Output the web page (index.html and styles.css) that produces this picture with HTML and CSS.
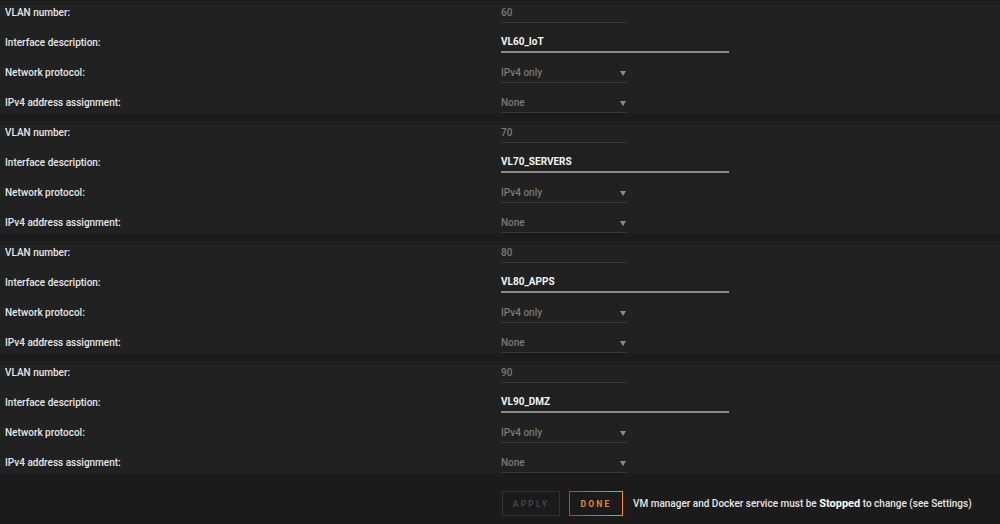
FILE: index.html
```html
<!DOCTYPE html>
<html lang="en">
	<head>
		<meta charset="utf-8">
		<title>Network Settings</title>
		<link rel="stylesheet" href="styles.css">
	</head>
	<body>
		<div class="shade">
			<div class="row"><span class="label">VLAN number:</span><span class="field num">60</span></div>
			<div class="row"><span class="label">Interface description:</span><span class="field desc">VL60_IoT</span></div>
			<div class="row"><span class="label">Network protocol:</span><span class="field select">IPv4 only</span></div>
			<div class="row"><span class="label">IPv4 address assignment:</span><span class="field select">None</span></div>
		</div>
		<div class="shade">
			<div class="row"><span class="label">VLAN number:</span><span class="field num">70</span></div>
			<div class="row"><span class="label">Interface description:</span><span class="field desc">VL70_SERVERS</span></div>
			<div class="row"><span class="label">Network protocol:</span><span class="field select">IPv4 only</span></div>
			<div class="row"><span class="label">IPv4 address assignment:</span><span class="field select">None</span></div>
		</div>
		<div class="shade">
			<div class="row"><span class="label">VLAN number:</span><span class="field num">80</span></div>
			<div class="row"><span class="label">Interface description:</span><span class="field desc">VL80_APPS</span></div>
			<div class="row"><span class="label">Network protocol:</span><span class="field select">IPv4 only</span></div>
			<div class="row"><span class="label">IPv4 address assignment:</span><span class="field select">None</span></div>
		</div>
		<div class="shade">
			<div class="row"><span class="label">VLAN number:</span><span class="field num">90</span></div>
			<div class="row"><span class="label">Interface description:</span><span class="field desc">VL90_DMZ</span></div>
			<div class="row"><span class="label">Network protocol:</span><span class="field select">IPv4 only</span></div>
			<div class="row"><span class="label">IPv4 address assignment:</span><span class="field select">None</span></div>
		</div>

		<div class="footer">
			<button class="btn" disabled>Apply</button>
			<button class="btn done">Done</button>
			<span class="note">VM manager and Docker service must be <b>Stopped</b> to change (see Settings)</span>
		</div>
	</body>
</html>
```

FILE: styles.css
```css
body {
	margin: 0;
	padding-top: 1px;
	background-color: #1c1b1b;
	font-family: Roboto, "Open Sans", sans-serif;
	font-size: 10px;
	color: #e6e6e6;
}

.shade {
	display: flex;
	flex-direction: column;
	gap: 8px;
	background-color: #212121;
	margin-top: 8px;
}
.shade:first-child {
	margin-top: 0;
}

.row {
	display: flex;
	align-items: flex-end;
	height: 22px;
}
.label {
	width: 496px;
	padding-left: 5px;
	padding-top: 2px;
	font-weight: 500;
	line-height: 22px;
	align-self: center;
}
.field {
	box-sizing: border-box;
	height: 22px;
	padding-top: 2px;
	line-height: 19px;
	width: 126px;
	border-bottom: 1px solid #383838;
	color: #7a7a7a;
	font-weight: 500;
}
.desc {
	width: 228px;
	color: #f2f2f2;
	font-weight: 700;
	border-bottom: 2px solid #8a8a8a;
	line-height: 18px;
}
.select {
	position: relative;
}
.select::after {
	content: "";
	position: absolute;
	right: 1px;
	top: 10px;
	border-left: 3px solid transparent;
	border-right: 3px solid transparent;
	border-top: 5px solid #8c8c8c;
}

.footer {
	display: flex;
	align-items: center;
	height: 51px;
	padding-left: 502px;
	padding-top: 10px;
	box-sizing: border-box;
}
.btn {
	box-sizing: border-box;
	height: 25px;
	width: 58px;
	margin: 0 9px 0 0;
	padding: 0;
	background: transparent;
	border: 1px solid #333;
	color: #444;
	font-family: Roboto, sans-serif;
	font-size: 8.5px;
	font-weight: 700;
	letter-spacing: 2.2px;
	text-transform: uppercase;
}
.done {
	width: 54px;
	color: #f0852d;
	border-image: linear-gradient(90deg, #e22828 0, #ff8c2f) 1;
}
.note {
	margin-left: 1px;
	color: #e6e6e6;
	font-size: 10px;
	font-weight: 500;
	white-space: nowrap;
}
.note b {
	font-weight: 700;
	color: #fff;
	font-size: 11px;
}
```
